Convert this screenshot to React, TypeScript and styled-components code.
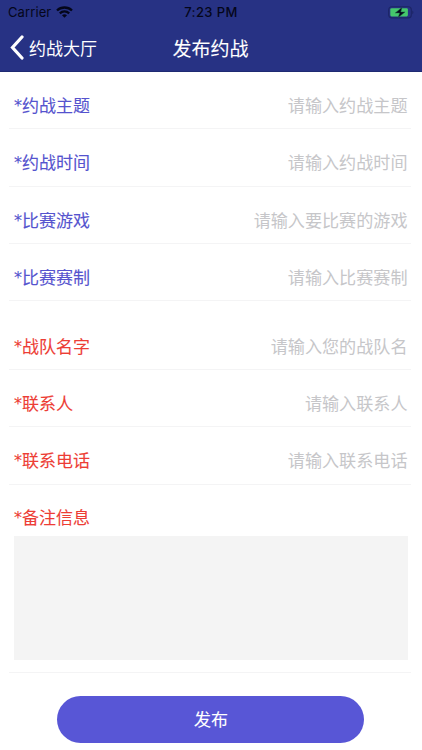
import React from "react";
import styled, { createGlobalStyle } from "styled-components";

const GlobalStyle = createGlobalStyle`
  * { box-sizing: border-box; }
  body {
    margin: 0;
    background: #fff;
    font-family: "Noto Sans CJK SC", sans-serif;
  }
`;

const Screen = styled.main`
  width: 422px;
  height: 750px;
  overflow: hidden;
  background: #fff;
`;

const Header = styled.header`
  height: 72px;
  background: #273284;
  border-bottom: 1px solid #1f2a72;
`;

const StatusBar = styled.div`
  display: grid;
  grid-template-columns: 1fr auto 1fr;
  align-items: center;
  height: 24px;
  padding: 0 8px 0 8px;
  font-family: Inter, sans-serif;
  font-size: 13px;
  line-height: 24px;
  color: #04061a;
`;

const Carrier = styled.div`
  display: flex;
  align-items: center;
  gap: 5px;
  letter-spacing: 0.1px;
`;

const Clock = styled.div`
  font-weight: 500;
  letter-spacing: 0.4px;
`;

const Battery = styled.svg`
  justify-self: end;
`;

const NavBar = styled.nav`
  display: grid;
  grid-template-columns: 1fr auto 1fr;
  align-items: center;
  height: 47px;
  padding: 0 11px 0 10px;
  color: #fff;
`;

const BackButton = styled.button`
  display: flex;
  align-items: center;
  gap: 5px;
  padding: 0;
  border: 0;
  background: none;
  color: inherit;
  font: 400 17px/24px "Noto Sans CJK SC", sans-serif;
`;

const Title = styled.h1`
  margin: 0;
  font-size: 19px;
  font-weight: 400;
  line-height: 28px;
  -webkit-text-stroke: 0.1px currentColor;
`;

const FieldGroup = styled.section<{ $gap?: number }>`
  margin: ${({ $gap = 0 }) => $gap}px 11px 0 9px;
`;

const Field = styled.label`
  display: flex;
  align-items: center;
  justify-content: space-between;
  height: 57.3px;
  padding: 9.6px 3.5px 0 5px;
  border-bottom: 1px solid #f4f4f5;
`;

const Label = styled.span<{ $tone: string }>`
  display: flex;
  flex: none;
  height: 24px;
  color: ${({ $tone }) => $tone};
  font-size: 17px;
  font-weight: 400;
  line-height: 24px;
  -webkit-text-stroke: 0.1px currentColor;
`;

const Star = styled.span`
  width: 8px;
  font-family: "DejaVu Sans", sans-serif;
  font-size: 16px;
  line-height: 25px;
`;

const Input = styled.input`
  flex: 1;
  min-width: 0;
  height: 26px;
  padding: 0;
  border: 0;
  outline: 0;
  background: none;
  color: #333;
  font: 400 17.1px/26px "Noto Sans CJK SC", sans-serif;
  text-align: right;
  &::placeholder {
    color: #c6c6c9;
    opacity: 1;
  }
`;

const Remark = styled.label`
  display: flex;
  flex-direction: column;
  height: 188px;
  padding: 20px 3px 0 5px;
  border-bottom: 1px solid #f4f4f5;
`;

const TextArea = styled.textarea`
  display: block;
  width: 100%;
  height: 124px;
  margin-top: 7px;
  border: 0;
  outline: 0;
  resize: none;
  background: #f4f4f4;
`;

const Submit = styled.button`
  display: block;
  width: 307px;
  height: 47px;
  margin: 23px auto 0 57.4px;
  padding: 0;
  border: 0;
  border-radius: 24px;
  background: #5856d6;
  color: #fff;
  font: 400 17px/46px "Noto Sans CJK SC", sans-serif;
  -webkit-text-stroke: 0.1px currentColor;
`;

const PURPLE = "#5553ce";
const RED = "#ed3d35";

const matchFields = [
  ["约战主题", "请输入约战主题"],
  ["约战时间", "请输入约战时间"],
  ["比赛游戏", "请输入要比赛的游戏"],
  ["比赛赛制", "请输入比赛赛制"],
];

const teamFields = [
  ["战队名字", "请输入您的战队名"],
  ["联系人", "请输入联系人"],
  ["联系电话", "请输入联系电话"],
];

function RequiredLabel({ tone, text }: { tone: string; text: string }) {
  return (
    <Label $tone={tone}>
      <Star>*</Star>
      {text}
    </Label>
  );
}

function WifiIcon() {
  return (
    <svg width="17" height="12" viewBox="0 0 17 12" fill="none" stroke="#04061a" strokeWidth="2.3">
      <path d="M1 4.5c4.2-4 10.8-4 15 0" />
      <path d="M3.8 7.4c2.7-2.6 6.7-2.6 9.4 0" />
      <path d="M8.5 11.8 6 9.3c1.4-1.3 3.6-1.3 5 0Z" fill="#04061a" stroke="none" />
    </svg>
  );
}

function BatteryIcon() {
  return (
    <Battery width="26" height="13" viewBox="0 0 26 13">
      <rect x=".7" y=".7" width="22.6" height="11.2" rx="3" fill="none" stroke="#1c2565" strokeWidth="1.1" />
      <rect x="2.3" y="2.2" width="17.6" height="8.2" rx="1.3" fill="#45c76c" />
      <path d="M24.3 4.5c1.5.5 1.5 3.2 0 3.7Z" fill="#1c2565" />
      <path d="M14.1 1.3 7.2 7h4.4l-1.4 4.6 6.9-5.7h-4.3Z" fill="#05091d" stroke="#206a48" strokeWidth=".5" />
    </Battery>
  );
}

export default function App() {
  return (
    <Screen>
      <GlobalStyle />
      <Header>
        <StatusBar>
          <Carrier>
            Carrier
            <WifiIcon />
          </Carrier>
          <Clock>7:23 PM</Clock>
          <BatteryIcon />
        </StatusBar>
        <NavBar>
          <BackButton type="button">
            <svg width="14" height="25" viewBox="0 0 14 25" fill="none" stroke="#fff" strokeWidth="3.2" strokeLinecap="round" strokeLinejoin="miter">
              <path d="M12 2 2.5 12.5 12 23" />
            </svg>
            约战大厅
          </BackButton>
          <Title>发布约战</Title>
        </NavBar>
      </Header>
      <FieldGroup>
        {matchFields.map(([label, hint]) => (
          <Field key={label}>
            <RequiredLabel tone={PURPLE} text={label} />
            <Input placeholder={hint} />
          </Field>
        ))}
      </FieldGroup>
      <FieldGroup $gap={11.5}>
        {teamFields.map(([label, hint]) => (
          <Field key={label}>
            <RequiredLabel tone={RED} text={label} />
            <Input placeholder={hint} />
          </Field>
        ))}
        <Remark>
          <RequiredLabel tone={RED} text="备注信息" />
          <TextArea />
        </Remark>
      </FieldGroup>
      <Submit type="button">发布</Submit>
    </Screen>
  );
}
